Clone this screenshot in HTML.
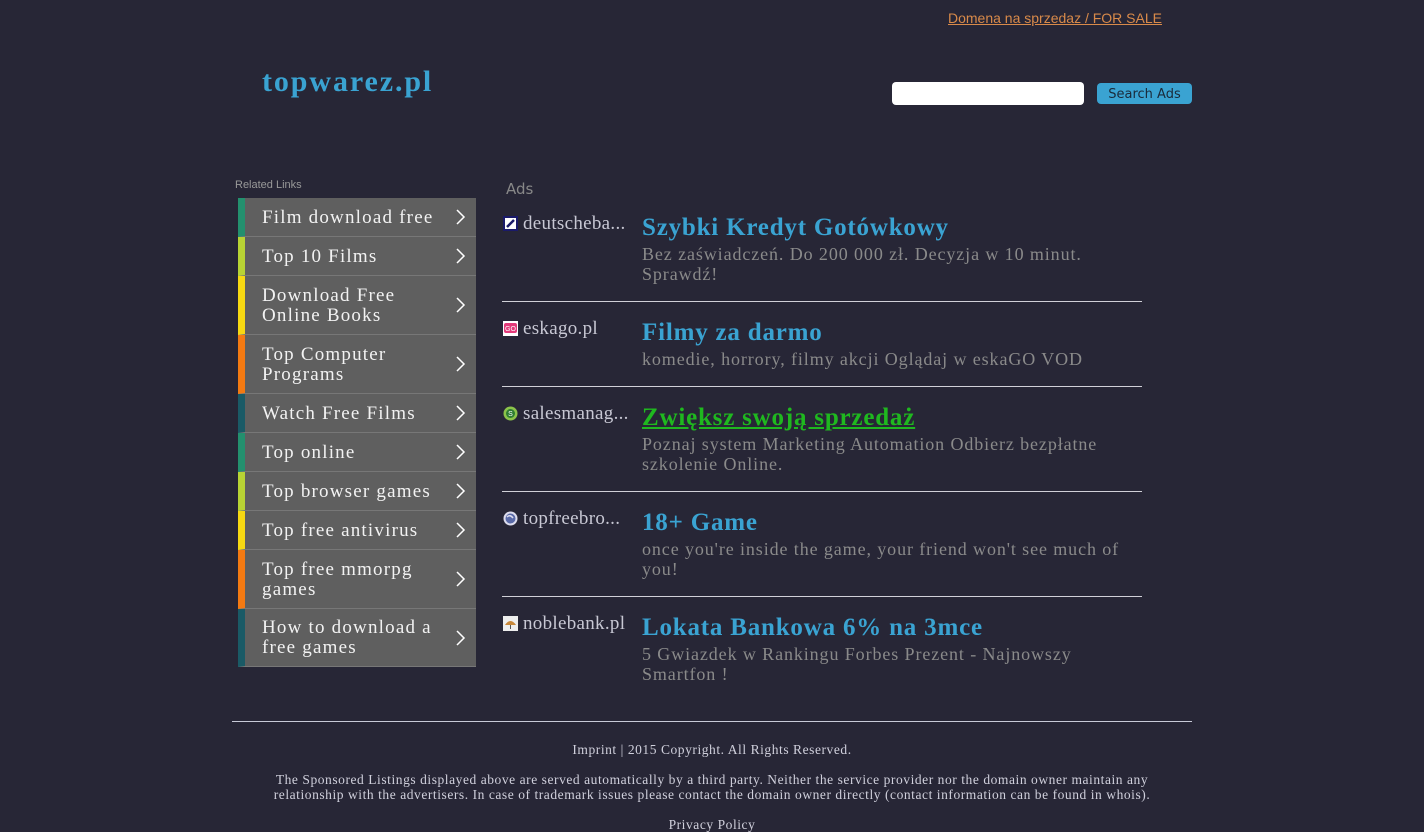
<!DOCTYPE html>
<html><head><meta charset="utf-8"><style>
*{margin:0;padding:0;box-sizing:border-box}
body{width:1424px;height:832px;background:#272636;font-family:"Liberation Serif",serif;position:relative;overflow:hidden}
.a{position:absolute}
.forsale{left:948px;top:10px;font:14px "Liberation Sans",sans-serif;color:#d98a4a;text-decoration:underline;letter-spacing:0px}
.logo{left:262px;top:65px;font-size:30px;font-weight:bold;color:#3aa3d2;letter-spacing:1.9px}
.inp{left:892px;top:82px;width:192px;height:23px;background:#fff;border-radius:4px}
.btn{left:1097px;top:83px;width:95px;height:21px;background:#3aa3d2;border-radius:4px;font:13px "DejaVu Sans",sans-serif;color:#1a2a3a;text-align:center;line-height:23px}
.rl{left:235px;top:179px;font:11px "Liberation Sans",sans-serif;color:#999}
.ads{left:506px;top:180px;font:15px "DejaVu Sans",sans-serif;color:#888}
.menu{left:238px;top:198px;width:238px}
.it{position:relative;background:#5f5f5f;border-bottom:1px solid #777;border-left:7px solid;color:#f2f2f2;font-size:19px;line-height:20px;padding:1px 30px 0 17px;display:flex;align-items:center;letter-spacing:1.2px}
.it svg{position:absolute;right:10px;top:50%;margin-top:-8px}
.ad{position:absolute;left:502px;width:640px}
.dom{position:absolute;left:21px;top:1px;font-size:19px;color:#c8c8d4;letter-spacing:0.3px}
.ic{position:absolute;left:1px;top:4px;width:15px;height:15px}
.t{position:absolute;left:140px;top:2px;font-size:25px;font-weight:bold;color:#3aa3d2;white-space:nowrap;letter-spacing:0.8px}
.d{position:absolute;left:140px;top:32px;font-size:18px;line-height:20px;color:#8a8a8a;width:495px;letter-spacing:0.9px}
.hr{position:absolute;left:502px;width:640px;height:1px;background:#d0d0d8}
.f{left:232px;width:960px;text-align:center;font-size:13.5px;color:#d0d0dc;line-height:15px;letter-spacing:0.55px}
</style></head><body>
<div class="a forsale">Domena na sprzedaz / FOR SALE</div>
<div class="a logo">topwarez.pl</div>
<div class="a inp"></div>
<div class="a btn">Search Ads</div>
<div class="a rl">Related Links</div>
<div class="a ads">Ads</div>
<div class="a menu">
<div class="it" style="height:39px;border-left-color:#23906e">Film download free<svg width="10" height="16"><path d="M1 1l7 7-7 7" stroke="#fff" stroke-width="1.5" fill="none"/></svg></div>
<div class="it" style="height:39px;border-left-color:#b8d334">Top 10 Films<svg width="10" height="16"><path d="M1 1l7 7-7 7" stroke="#fff" stroke-width="1.5" fill="none"/></svg></div>
<div class="it" style="height:59px;border-left-color:#f7d912">Download Free<br>Online Books<svg width="10" height="16"><path d="M1 1l7 7-7 7" stroke="#fff" stroke-width="1.5" fill="none"/></svg></div>
<div class="it" style="height:59px;border-left-color:#f47a12">Top Computer<br>Programs<svg width="10" height="16"><path d="M1 1l7 7-7 7" stroke="#fff" stroke-width="1.5" fill="none"/></svg></div>
<div class="it" style="height:39px;border-left-color:#1a5a66">Watch Free Films<svg width="10" height="16"><path d="M1 1l7 7-7 7" stroke="#fff" stroke-width="1.5" fill="none"/></svg></div>
<div class="it" style="height:39px;border-left-color:#23906e">Top online<svg width="10" height="16"><path d="M1 1l7 7-7 7" stroke="#fff" stroke-width="1.5" fill="none"/></svg></div>
<div class="it" style="height:39px;border-left-color:#b8d334">Top browser games<svg width="10" height="16"><path d="M1 1l7 7-7 7" stroke="#fff" stroke-width="1.5" fill="none"/></svg></div>
<div class="it" style="height:39px;border-left-color:#f7d912">Top free antivirus<svg width="10" height="16"><path d="M1 1l7 7-7 7" stroke="#fff" stroke-width="1.5" fill="none"/></svg></div>
<div class="it" style="height:59px;border-left-color:#f47a12">Top free mmorpg<br>games<svg width="10" height="16"><path d="M1 1l7 7-7 7" stroke="#fff" stroke-width="1.5" fill="none"/></svg></div>
<div class="it" style="height:58px;border-left-color:#1a5a66">How to download a<br>free games<svg width="10" height="16"><path d="M1 1l7 7-7 7" stroke="#fff" stroke-width="1.5" fill="none"/></svg></div>
</div>

<div class="ad" style="top:212px"><svg class="ic" viewBox="0 0 15 15"><rect width="15" height="15" fill="#1a1a6a"/><rect x="2" y="2" width="11" height="11" fill="#fff"/><path d="M4 11L11 4" stroke="#1a1a6a" stroke-width="2.5"/></svg><div class="dom">deutscheba...</div><div class="t">Szybki Kredyt Gotówkowy</div><div class="d">Bez zaświadczeń. Do 200 000 zł. Decyzja w 10 minut. Sprawdź!</div></div>
<div class="hr" style="top:301px"></div>
<div class="ad" style="top:317px"><svg class="ic" viewBox="0 0 15 15"><rect width="15" height="15" fill="#fff"/><rect x="1" y="2" width="13" height="10" rx="2" fill="#e33a7a"/><text x="7.5" y="10" font-size="7" fill="#fff" text-anchor="middle" font-family="Liberation Sans">GO</text></svg><div class="dom">eskago.pl</div><div class="t">Filmy za darmo</div><div class="d">komedie, horrory, filmy akcji Oglądaj w eskaGO VOD</div></div>
<div class="hr" style="top:386px"></div>
<div class="ad" style="top:402px"><svg class="ic" viewBox="0 0 15 15"><circle cx="7.5" cy="7.5" r="7" fill="#8bc34a"/><circle cx="7.5" cy="7.5" r="4.5" fill="#2e7d32"/><text x="7.5" y="10" font-size="7" fill="#fff" text-anchor="middle" font-family="Liberation Sans">S</text></svg><div class="dom">salesmanag...</div><div class="t" style="color:#1fb81f;text-decoration:underline">Zwiększ swoją sprzedaż</div><div class="d">Poznaj system Marketing Automation Odbierz bezpłatne szkolenie Online.</div></div>
<div class="hr" style="top:491px"></div>
<div class="ad" style="top:507px"><svg class="ic" viewBox="0 0 15 15"><circle cx="7.5" cy="7.5" r="7" fill="#dde"/><circle cx="7.5" cy="7.5" r="5" fill="#5a6aa8"/><path d="M4 6q3-3 6 1" stroke="#dde" stroke-width="1.5" fill="none"/></svg><div class="dom">topfreebro...</div><div class="t">18+ Game</div><div class="d">once you're inside the game, your friend won't see much of you!</div></div>
<div class="hr" style="top:596px"></div>
<div class="ad" style="top:612px"><svg class="ic" viewBox="0 0 15 15"><rect width="15" height="15" fill="#eee"/><path d="M2 9q5.5-8 11 0z" fill="#c8883a"/><path d="M7.5 9v4" stroke="#555"/></svg><div class="dom">noblebank.pl</div><div class="t">Lokata Bankowa 6% na 3mce</div><div class="d">5 Gwiazdek w Rankingu Forbes Prezent - Najnowszy Smartfon !</div></div>

<div class="a" style="left:232px;top:721px;width:960px;height:1px;background:#c8cad8"></div>
<div class="a f" style="top:742px">Imprint | 2015 Copyright. All Rights Reserved.</div>
<div class="a f" style="top:772px;left:252px;width:920px">The Sponsored Listings displayed above are served automatically by a third party. Neither the service provider nor the domain owner maintain any relationship with the advertisers. In case of trademark issues please contact the domain owner directly (contact information can be found in whois).</div>
<div class="a f" style="top:817px">Privacy Policy</div>
</body></html>
